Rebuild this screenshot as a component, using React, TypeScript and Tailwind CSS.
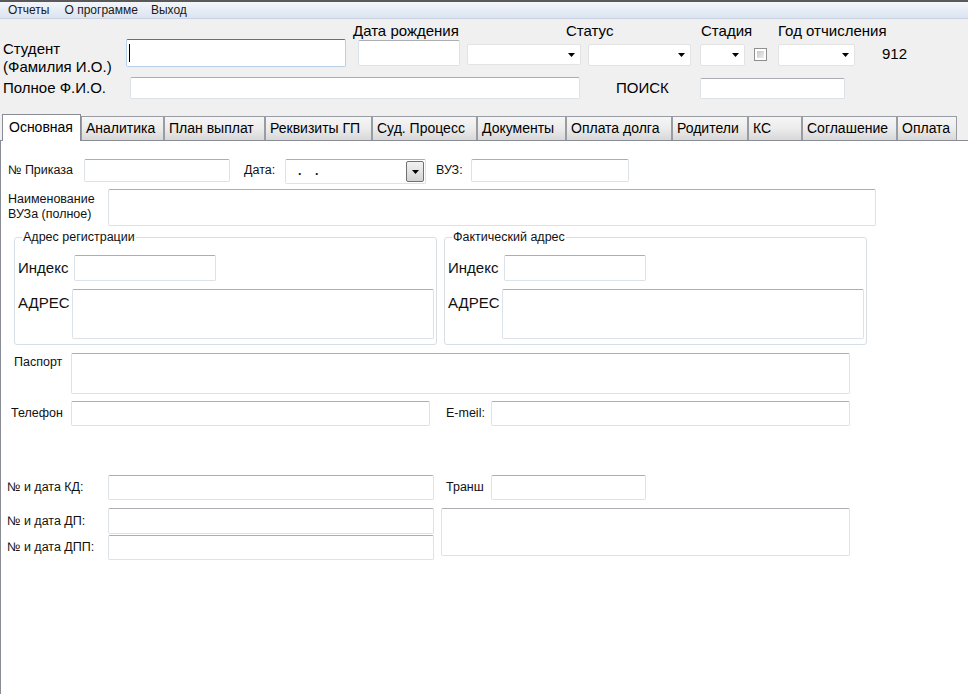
import React from "react";

const box =
  "bg-white border border-[#dde2e8] border-t-[#abadb3] rounded-[2px] shrink-0";

function Field({ className = "" }: { className?: string }) {
  return <div className={`${box} ${className}`} />;
}

function Arrow() {
  return (
    <svg width="7" height="4" viewBox="0 0 7 4" className="shrink-0">
      <path d="M0 0h7L3.5 4z" fill="#000" />
    </svg>
  );
}

function Combo({ className = "" }: { className?: string }) {
  return (
    <div
      className={`bg-white border border-[#e3e3e3] rounded-[2px] flex items-center justify-end pr-[5px] shrink-0 ${className}`}
    >
      <Arrow />
    </div>
  );
}

const tabs = [
  { name: "Аналитика", w: "w-[83px]" },
  { name: "План выплат", w: "w-[101px]" },
  { name: "Реквизиты ГП", w: "w-[107px]" },
  { name: "Суд. Процесс", w: "w-[105px]" },
  { name: "Документы", w: "w-[89px]" },
  { name: "Оплата долга", w: "w-[106px]" },
  { name: "Родители", w: "w-[76px]" },
  { name: "КС", w: "w-[54px]" },
  { name: "Соглашение", w: "w-[95px]" },
  { name: "Оплата", w: "w-[60px]" },
];

function AddressGroup({ title, className = "" }: { title: string; className?: string }) {
  return (
    <div
      className={`w-[423px] h-[108px] border border-[#d5dfe5] rounded-[3px] flex flex-col shrink-0 ${className}`}
    >
      <span className="-mt-[8px] ml-[7px] self-start px-[1px] bg-white leading-[14px] text-[12.5px] text-[#111]">
        {title}
      </span>
      <div className="mt-[11px] flex items-center">
        <span className="w-[59px] pl-[3px] text-[15px]">Индекс</span>
        <Field className="w-[142px] h-[26px]" />
      </div>
      <div className="mt-[8px] flex items-start">
        <span className="w-[57px] pl-[3px] pt-[4px] leading-[20px] text-[15px]">АДРЕС</span>
        <Field className="w-[362px] h-[50px]" />
      </div>
    </div>
  );
}

export default function App() {
  return (
    <div
      className="h-screen w-full overflow-hidden bg-[#f0f0f0] flex flex-col text-black"
      style={{ fontFamily: '"Liberation Sans", Arial, sans-serif' }}
    >
      {/* menu */}
      <div className="border-t-2 border-[#5a5a5a] h-[19px] bg-gradient-to-b from-[#f3f6fb] to-[#dbe4f1] border-b border-b-[#c9d3e2] flex items-center text-[12px] text-[#1a1a1a]">
        <span className="ml-[8px]">Отчеты</span>
        <span className="ml-[15px]">О программе</span>
        <span className="ml-[13px]">Выход</span>
      </div>

      {/* header row A */}
      <div className="flex h-[48px]">
        <div className="w-[126px] h-[48px] pl-[3px] pt-[21px] text-[15px] leading-[18px] shrink-0 whitespace-nowrap">
          Студент
          <br />
          (Фамилия И.О.)
        </div>
        <div className="flex flex-col">
          <div className="flex items-end h-[20px] text-[15px] leading-[16px]">
            <span className="w-[227px]" />
            <span className="w-[213px]">Дата рождения</span>
            <span className="w-[135px]">Статус</span>
            <span className="w-[77px]">Стадия</span>
            <span>Год отчисления</span>
          </div>
          <div className="flex items-start h-[28px]">
            <div className="w-[220px] h-[28px] bg-white border border-[#b7d0e8] border-t-[#3d7bad] rounded-[2px] flex items-center pl-[2px] shrink-0">
              <div className="w-px h-[18px] bg-black" />
            </div>
            <Field className="ml-[12px] mt-[1px] w-[102px] h-[26px]" />
            <Combo className="ml-[7px] mt-[5px] w-[114px] h-[21px]" />
            <Combo className="ml-[7px] mt-[5px] w-[103px] h-[22px]" />
            <Combo className="ml-[9px] mt-[5px] w-[45px] h-[22px]" />
            <div className="ml-[9px] mt-[9px] w-[13px] h-[13px] border border-[#8f8f8f] bg-white p-[2px] shrink-0">
              <div className="w-full h-full bg-gradient-to-br from-[#c8c8c8] to-[#eeeeee]" />
            </div>
            <Combo className="ml-[11px] mt-[5px] w-[77px] h-[22px]" />
            <span className="ml-[27px] mt-[5px] text-[15px] leading-[20px]">912</span>
          </div>
        </div>
      </div>

      {/* header row B */}
      <div className="mt-[10px] flex items-center h-[22px]">
        <span className="w-[130px] pl-[3px] text-[15px]">Полное Ф.И.О.</span>
        <Field className="w-[450px] h-[22px]" />
        <span className="w-[120px] pl-[36px] text-[15px]">ПОИСК</span>
        <Field className="w-[145px] h-[21px]" />
      </div>

      {/* tabs */}
      <div className="mt-[15px] h-[26px] flex items-end pl-[2px] text-[14px]">
        <div className="relative z-10 -mb-px w-[79px] h-[27px] bg-white border border-b-0 border-[#898c95] pl-[6px] leading-[25px] shrink-0">
          Основная
        </div>
        {tabs.map((t) => (
          <div
            key={t.name}
            className={`${t.w} h-[24px] border border-b-0 border-[#9a9ca3] bg-gradient-to-b from-[#f6f6f6] via-[#ececec] to-[#d8d8d8] pl-[4px] leading-[23px] shrink-0 whitespace-nowrap overflow-hidden`}
          >
            {t.name}
          </div>
        ))}
      </div>

      {/* panel */}
      <div className="flex-1 bg-white border-l border-t border-[#898c95] text-[12.5px] text-[#111]">
        <div className="mt-[18px] flex items-start h-[25px]">
          <span className="w-[83px] pl-[7px] leading-[23px]">№ Приказа</span>
          <Field className="w-[146px] h-[23px]" />
          <span className="w-[55px] pl-[14px] leading-[23px]">Дата:</span>
          <div className={`${box} w-[141px] h-[25px] flex items-center justify-between pl-[12px] pr-[1px]`}>
            <span className="tracking-[5px] -mt-[1px] font-bold">. .</span>
            <div className="w-[18px] h-[21px] border border-[#707070] rounded-[2px] bg-gradient-to-b from-[#f2f2f2] to-[#d4d4d4] flex items-center justify-center">
              <Arrow />
            </div>
          </div>
          <span className="w-[45px] pl-[10px] leading-[23px]">ВУЗ:</span>
          <Field className="w-[158px] h-[23px]" />
        </div>

        <div className="mt-[5px] flex items-start">
          <span className="w-[107px] pl-[7px] pt-[3px] leading-[15px]">
            Наименование
            <br />
            ВУЗа (полное)
          </span>
          <Field className="w-[768px] h-[37px]" />
        </div>

        <div className="mt-[11px] flex">
          <AddressGroup title="Адрес регистрации" className="ml-[13px]" />
          <AddressGroup title="Фактический адрес" className="ml-[7px]" />
        </div>

        <div className="mt-[8px] flex items-start">
          <span className="w-[70px] pl-[13px] pt-[2px] leading-[15px]">Паспорт</span>
          <Field className="w-[779px] h-[41px]" />
        </div>

        <div className="mt-[7px] flex items-center h-[25px]">
          <span className="w-[70px] pl-[10px]">Телефон</span>
          <Field className="w-[359px] h-[25px]" />
          <span className="w-[61px] pl-[16px]">E-meil:</span>
          <Field className="w-[359px] h-[25px]" />
        </div>

        <div className="mt-[49px] flex items-center h-[25px]">
          <span className="w-[107px] pl-[6px]">№ и дата КД:</span>
          <Field className="w-[326px] h-[25px]" />
          <span className="w-[57px] pl-[12px]">Транш</span>
          <Field className="w-[155px] h-[25px]" />
        </div>

        <div className="mt-[8px] flex items-start">
          <div className="flex flex-col">
            <div className="flex items-center h-[26px]">
              <span className="w-[107px] pl-[6px]">№ и дата ДП:</span>
              <Field className="w-[326px] h-[26px]" />
            </div>
            <div className="mt-[1px] flex items-center h-[25px]">
              <span className="w-[107px] pl-[6px]">№ и дата ДПП:</span>
              <Field className="w-[326px] h-[25px]" />
            </div>
          </div>
          <Field className="ml-[7px] w-[409px] h-[48px]" />
        </div>
      </div>
    </div>
  );
}
